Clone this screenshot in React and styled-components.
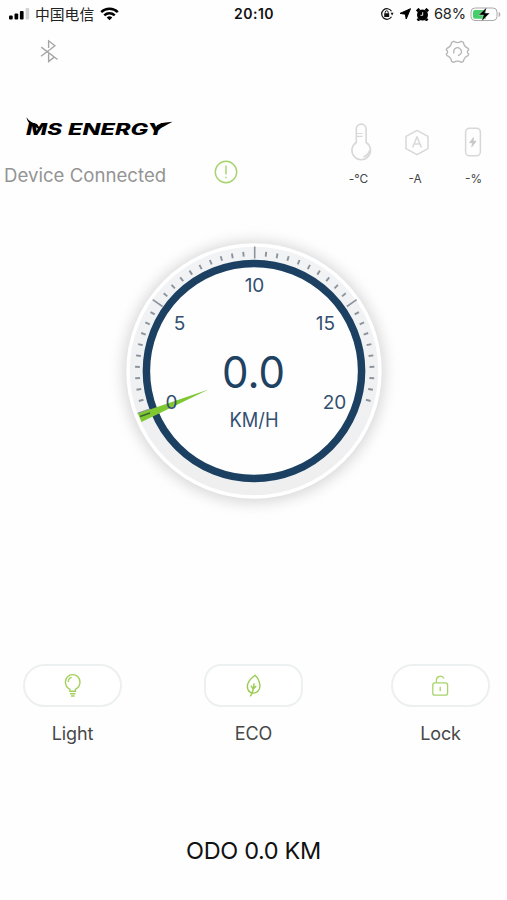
import React from 'react';
import styled, { createGlobalStyle } from 'styled-components';

const GlobalStyle = createGlobalStyle`
  * { box-sizing: border-box; }
  body { margin: 0; background: #fefefe; }
`;

const Screen = styled.main`
  width: 507px;
  height: 900px;
  display: flex;
  flex-direction: column;
  background: #fefefe;
  color: #111;
  font-family: Inter, 'Noto Sans CJK SC', sans-serif;
  overflow: hidden;
`;

const StatusBar = styled.header`
  height: 28px;
  display: grid;
  grid-template-columns: 1fr auto 1fr;
  align-items: center;
  padding: 0 6px 0 9px;
`;

const StatusGroup = styled.div`
  display: flex;
  align-items: center;
  justify-content: ${(p) => (p.$end ? 'flex-end' : 'flex-start')};
  gap: ${(p) => p.$gap}px;
`;

const Carrier = styled.span`
  font: 400 14.8px/20px 'Noto Sans CJK SC', sans-serif;
  color: #222;
  margin-left: -1px;
`;

const Clock = styled.span`
  font-size: 14px;
  font-weight: 600;
  letter-spacing: 0.5px;
  margin: -1px 2px 0 0;
`;

const Percent = styled.span`
  font-size: 14.6px;
  letter-spacing: -0.1px;
  color: #222;
  margin: -1px -1px 0 0;
`;

const NavBar = styled.nav`
  height: 50px;
  display: flex;
  justify-content: space-between;
  padding: 11px 37px 0 39px;
`;

const Info = styled.section`
  height: 132px;
  display: flex;
  justify-content: space-between;
  padding-right: 3px;
`;

const Identity = styled.div`
  width: 242px;
  padding-top: 36px;
`;

const Brand = styled.div`
  height: 29px;
  padding-left: 24px;
`;

const DeviceRow = styled.div`
  margin-top: 14px;
  height: 30px;
  padding: 0 4px 0 4px;
  display: flex;
  align-items: center;
  justify-content: space-between;
`;

const DeviceText = styled.span`
  font-size: 18.6px;
  letter-spacing: 0.02px;
  color: #949494;
  white-space: nowrap;
  margin-top: 5px;
`;

const Readings = styled.div`
  display: flex;
  padding-top: 44px;
`;

const Reading = styled.div`
  width: ${(p) => p.$width}px;
  display: flex;
  flex-direction: column;
  align-items: center;
  gap: 9px;
  font-size: 11.8px;
  line-height: 16px;
  color: #444;
`;

const ReadingLabel = styled.span`
  margin-left: ${(p) => p.$shift}px;
`;

const GaugeArea = styled.section`
  height: 322px;
  display: flex;
  justify-content: center;
`;

const Controls = styled.section`
  margin-top: 132px;
  display: grid;
  grid-template-columns: 181px 187px 99px;
  padding-left: 23px;
`;

const Control = styled.div`
  width: 99px;
  display: flex;
  flex-direction: column;
  align-items: center;
  gap: 14px;
  font-size: 18px;
  line-height: 25px;
  letter-spacing: -0.1px;
  color: #484848;
`;

const Pill = styled.button`
  width: 99px;
  height: 43px;
  padding: 0;
  border: 2px solid #edf0f0;
  border-radius: ${(p) => p.$radius}px;
  background: #fff;
  display: flex;
  align-items: center;
  justify-content: center;
`;

const Odometer = styled.footer`
  margin-top: 88px;
  text-align: center;
  font-size: 23.5px;
  line-height: 34px;
  letter-spacing: -0.35px;
  color: #111;
`;

const Signal = () => (
  <svg width="21" height="12" viewBox="0 0 21 12">
    <rect x="0" y="7.5" width="3.7" height="4" rx="1" />
    <rect x="5.5" y="5.5" width="3.7" height="6" rx="1" />
    <rect x="10.9" y="3" width="3.7" height="8.5" rx="1" />
    <rect x="16.6" y="0" width="3.6" height="11.5" rx="1" fill="#d2d2d2" />
  </svg>
);

const Wifi = () => (
  <svg width="19" height="14" viewBox="0 0 19 14" fill="none" stroke="#000" strokeWidth="2.5">
    <path d="M1.2 5.2a12 12 0 0 1 16.6 0" />
    <path d="M4.3 8.4a7.6 7.6 0 0 1 10.4 0" />
    <path d="M9.5 13.3 6.7 10.5a4 4 0 0 1 5.6 0z" fill="#000" stroke="none" />
  </svg>
);

const RotationLock = () => (
  <svg width="14" height="14" viewBox="0 0 14 14" fill="none" stroke="#111">
    <path d="M11.5 4.2A5.3 5.3 0 1 0 11.5 9.8" strokeWidth="1.2" />
    <path d="M10.6 5.8h3L12.1 8.5z" fill="#111" stroke="none" />
    <rect x="4.2" y="6.2" width="5" height="3.8" rx=".5" fill="#111" stroke="none" />
    <path d="M5.2 6.5V5.3a1.5 1.5 0 0 1 3 0v1.2" />
  </svg>
);

const Location = () => (
  <svg width="12" height="12" viewBox="0 0 12 12">
    <path d="M11.5.7 7.2 11 6.4 6.2 1 5.4z" stroke="#000" strokeLinejoin="round" strokeWidth="1" />
  </svg>
);

const Alarm = () => (
  <svg width="13" height="13" viewBox="0 0 13 13">
    <circle cx="6.5" cy="7" r="5.5" />
    <path d="m.8 3.3 2.7-2.4M12.2 3.3 9.5.9M3 11l-1.3 1.6M10 11l1.3 1.6" stroke="#000" strokeWidth="2.8" />
    <path d="M6.7 4.2v3.1H4.5" fill="none" stroke="#fff" strokeWidth=".9" />
  </svg>
);

const Battery = () => (
  <svg width="31" height="15" viewBox="0 0 31 15">
    <rect x="1" y="1" width="26" height="12.5" rx="4" fill="#fff" stroke="#aaa" />
    <path d="M5 3h11v8.8H5a2 2 0 0 1-2-2V5a2 2 0 0 1 2-2z" fill="#43cf6a" />
    <path d="M28.6 5c2.4.5 2.4 4.5 0 5z" fill="#b0b0b0" />
    <path d="M17 0 8.6 8h4.9l-2 6.4L19.8 6h-5z" stroke="#fff" strokeWidth=".4" />
  </svg>
);

const Bluetooth = () => (
  <svg width="21" height="25" viewBox="0 0 21 25" fill="none" stroke="#a5a5a5" strokeWidth="1.35">
    <path d="M2.3 8.1 18.5 20.5M2 17.3l8.2-6.2M9.6 9V1.8l6.3 4.9L10.5 11M9.6 14.5v8l5.6-4.4" />
  </svg>
);

const Settings = () => (
  <svg width="25" height="25" viewBox="0 0 25 25" fill="none" stroke="#b5b5b5" strokeWidth="1.3" strokeLinejoin="round">
    <path d="M8.7 2.3c2 1.7 5.6 1.7 7.6 0l2.1 1c.4 3.1 1.9 4.8 4.8 6l.5 1.5c-1.8 1.6-1.8 2.6 0 4.2l-.6 1.6c-2.9 1.1-4.3 2.8-4.7 5.8l-2.1 1c-2-1.7-5.6-1.7-7.6 0l-2.1-1c-.4-3-1.8-4.7-4.7-5.8L1.3 15c1.8-1.6 1.8-2.6 0-4.2l.5-1.5c2.9-1.2 4.4-2.9 4.8-6z" />
    <path d="M9.1 14.4a3.9 3.9 0 1 1 3.8 2.1" />
  </svg>
);

const Wordmark = () => (
  <svg width="151" height="24" viewBox="0 0 151 24" role="img" aria-label="MS ENERGY">
    <g fontFamily="Inter, sans-serif" fontWeight="800" fontStyle="italic" fontSize="15.5">
      <text x="2" y="21" textLength="36" lengthAdjust="spacingAndGlyphs">MS</text>
      <text x="44" y="21" textLength="97" lengthAdjust="spacingAndGlyphs">ENERGY</text>
    </g>
    <path d="M2.5 3.2C5 7.2 8.5 9.2 13 9.9l4 6-6.2-3.2C6.5 11 3 7.5 2.5 3.2z" />
    <path d="M130 16.4c7-1.8 12-5.2 18.5-8.6-6.5.7-11.5 1.1-15.5 3.4z" />
  </svg>
);

const Alert = () => (
  <svg width="24" height="24" viewBox="0 0 24 24" fill="none" stroke="#a5d36c" strokeWidth="1.4">
    <circle cx="12" cy="12" r="10.7" />
    <path d="M12 5.5v9M12 16.7v1.5" />
  </svg>
);

const Thermometer = () => (
  <svg width="24" height="40" viewBox="0 0 24 40" fill="none" stroke="#d8d8d8" strokeWidth="1.6">
    <path d="M7.3 20.5V7a4.9 4.9 0 0 1 9.8 0v13.5a9.3 9.3 0 1 1-9.8 0z" />
    <path d="M8 11.5h5.5M8 14.3h5.5" strokeWidth="1.2" />
    <path d="M20.8 28.5a9 9 0 0 1-6.3 6.5c3-1 4.5-3 6.3-6.5z" fill="#d5d5d5" />
  </svg>
);

const Ampere = () => (
  <svg width="26" height="40" viewBox="0 0 26 40" fill="none" stroke="#d8d8d8" strokeWidth="1.5" strokeLinejoin="round">
    <path d="m13 8.4 11 6v12.3l-11 6-11-6V14.4z" />
    <path d="m8.6 25.5 4.4-10.7 4.4 10.7M10.2 22.1h5.6" />
  </svg>
);

const PowerCell = () => (
  <svg width="20" height="40" viewBox="0 0 20 40" fill="none" stroke="#d8d8d8" strokeWidth="1.5">
    <rect x="1.6" y="6.2" width="14.8" height="27.6" rx="4" />
    <path d="m9.5 15.5-4 5.2h3l-.8 4.2 4.5-5.7h-3z" fill="#c6c6c6" stroke="#c6c6c6" strokeWidth=".7" />
  </svg>
);

const Bulb = () => (
  <svg width="20" height="26" viewBox="0 0 20 26" fill="none" stroke="#a3d05d" strokeWidth="1.4">
    <path d="M7 18.3v-2C4.5 14.9 2.4 12 2.4 8.9a7.3 7.3 0 0 1 14.6 0c0 3.1-2.1 6-4.6 7.4v2z" />
    <path d="M5.3 8.9c0-2.6 1.4-4.1 3.4-4.5M7 20.7h5.5M8 23h3.6" />
  </svg>
);

const Leaf = () => (
  <svg width="20" height="26" viewBox="0 0 20 26" fill="none" stroke="#98cc4d" strokeWidth="1.4">
    <path d="M11 2.2C6 6 3.1 9.4 3.4 13.9c.2 3.4 1.8 5.4 4.5 6.1 4.9.8 8.3-2.6 8-7.7-.3-4.4-2.2-7.7-4.9-10.1z" />
    <path d="M6.3 23.3c2.6-3.6 3.5-7.2 3.7-13M7 12.7l2.2 3.5 3-3.2" />
  </svg>
);

const Unlock = () => (
  <svg width="20" height="26" viewBox="0 0 20 26" fill="none" stroke="#a8d46c" strokeWidth="1.3">
    <rect x="1.8" y="9.8" width="14.8" height="12.4" rx="2.2" />
    <path d="M5.4 9.6V7.3a4 4 0 0 1 7.6-1.8" />
    <path d="M9.2 13.8v4.5" />
  </svg>
);

const ticks = Array.from({ length: 40 }, (_, i) => i);
const numerals = [
  { value: 0, x: 161.5, y: 199 },
  { value: 5, x: 169.5, y: 119.5 },
  { value: 10, x: 244.5, y: 81.5 },
  { value: 15, x: 315.5, y: 119.5 },
  { value: 20, x: 324.5, y: 199 },
];

const Gauge = () => (
  <svg width="487" height="322" viewBox="0 0 487 322">
    <defs>
      <filter id="soft" x="-30%" y="-30%" width="160%" height="160%">
        <feGaussianBlur stdDeviation="7" />
      </filter>
      <linearGradient id="bezel" x1="0" y1="0" x2="0" y2="1">
        <stop stopColor="#f1f3f5" />
        <stop offset="1" stopColor="#efeff0" />
      </linearGradient>
    </defs>
    <circle cx="244" cy="162" r="131" fill="#d8d8d8" filter="url(#soft)" />
    <circle cx="244" cy="161" r="126" fill="url(#bezel)" stroke="#fff" strokeWidth="3.5" />
    <circle cx="244" cy="161" r="107.6" fill="#fefefe" stroke="#1b4061" strokeWidth="7.5" />
    {ticks.map((i) => (
      <path
        key={i}
        d={i % 10 === 0 ? 'M244 36.5v12' : 'M244 41.3v4.8'}
        transform={`translate(.7 0) rotate(${i * 5.5 - 110} 244 161)`}
        stroke="#8b939c"
        strokeWidth={i % 10 === 0 ? 1.6 : 1.9}
      />
    ))}
    <path d="m128 203.5 70.5-24L131.5 212z" fill="#7fc832" />
    <path d="m130 206.5 10-3.5" stroke="#3e6330" strokeWidth="1.7" />
    <g fill="#334f70" fontFamily="Inter, sans-serif" textAnchor="middle">
      {numerals.map((n) => (
        <text key={n.value} x={n.x} y={n.y} fontSize="19">{n.value}</text>
      ))}
      <text x="243.5" y="177.5" fontSize="43.5" fill="#1f4263" textLength="63" lengthAdjust="spacingAndGlyphs">0.0</text>
      <text x="244" y="217" fontSize="19.5" textLength="49" lengthAdjust="spacingAndGlyphs">KM/H</text>
    </g>
  </svg>
);

const readings = [
  { label: '-°C', icon: <Thermometer />, width: 58, shift: -5 },
  { label: '-A', icon: <Ampere />, width: 54, shift: -4 },
  { label: '-%', icon: <PowerCell />, width: 60, shift: -1 },
];

const controls = [
  { label: 'Light', icon: <Bulb />, radius: 22 },
  { label: 'ECO', icon: <Leaf />, radius: 17 },
  { label: 'Lock', icon: <Unlock />, radius: 22 },
];

export default function App() {
  return (
    <>
      <GlobalStyle />
      <Screen>
        <StatusBar>
          <StatusGroup $gap={6}>
            <Signal />
            <Carrier>中国电信</Carrier>
            <Wifi />
          </StatusGroup>
          <Clock>20:10</Clock>
          <StatusGroup $end $gap={5}>
            <RotationLock />
            <Location />
            <Alarm />
            <Percent>68%</Percent>
            <Battery />
          </StatusGroup>
        </StatusBar>
        <NavBar>
          <Bluetooth />
          <Settings />
        </NavBar>
        <Info>
          <Identity>
            <Brand><Wordmark /></Brand>
            <DeviceRow>
              <DeviceText>Device Connected</DeviceText>
              <Alert />
            </DeviceRow>
          </Identity>
          <Readings>
            {readings.map((r) => (
              <Reading key={r.label} $width={r.width}>
                {r.icon}
                <ReadingLabel $shift={r.shift}>{r.label}</ReadingLabel>
              </Reading>
            ))}
          </Readings>
        </Info>
        <GaugeArea><Gauge /></GaugeArea>
        <Controls>
          {controls.map((c) => (
            <Control key={c.label}>
              <Pill $radius={c.radius} aria-label={c.label}>{c.icon}</Pill>
              <span>{c.label}</span>
            </Control>
          ))}
        </Controls>
        <Odometer>ODO 0.0 KM</Odometer>
      </Screen>
    </>
  );
}
